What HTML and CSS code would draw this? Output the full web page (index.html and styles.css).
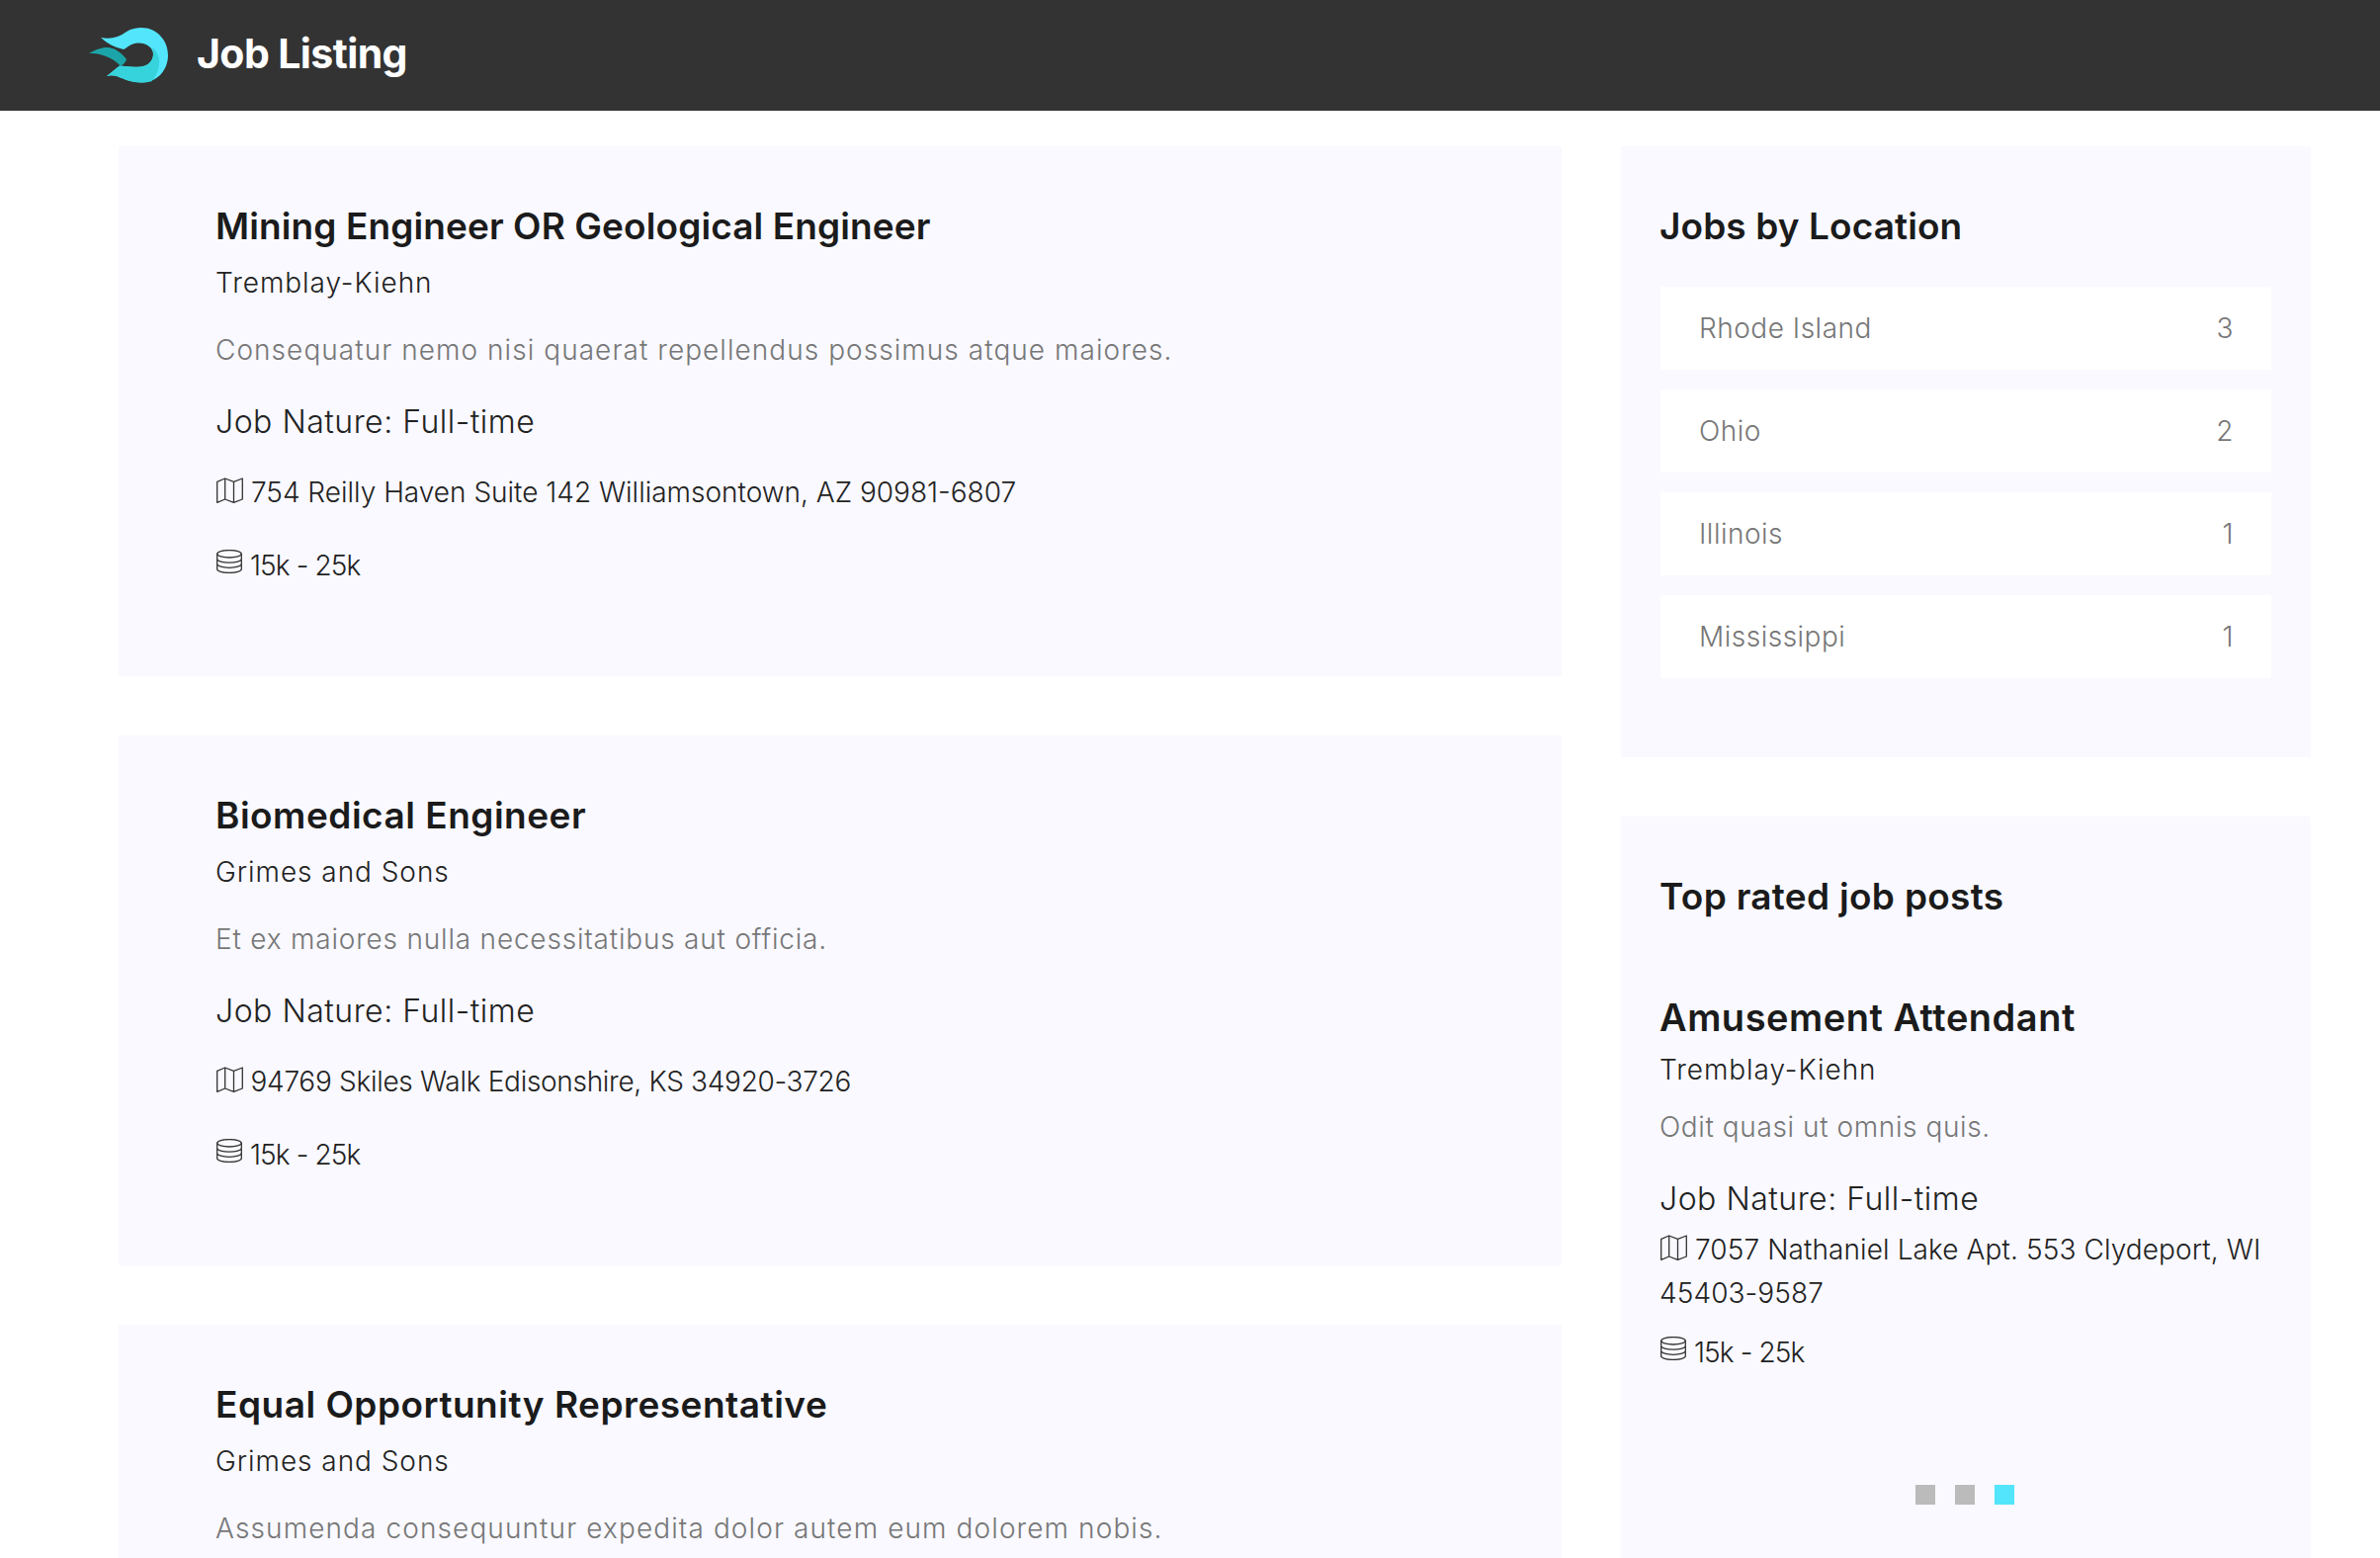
FILE: index.html
```html
<!DOCTYPE html>
<html lang="en">
<head>
<meta charset="utf-8">
<title>Job Listing</title>
<link rel="stylesheet" href="styles.css">
</head>
<body>
<svg class="defs" width="0" height="0" aria-hidden="true">
  <symbol id="i-map" viewBox="0 0 27 26"><path d="M.7 4.300 8.700 1 17.500 4.300 26.300 1V22L17.500 25.300 8.700 22 .7 25.300ZM8.700 1V22M17.500 4.300V25.300" fill="none" stroke="#333" stroke-width="1.300" stroke-linejoin="round"/></symbol>
  <symbol id="i-db" viewBox="0 0 27 24"><g fill="none" stroke="#333" stroke-width="1.300"><ellipse cx="13" cy="4.300" rx="12.300" ry="3.700"/><path d="M.7 4.300V19.700C.7 21.800 6.200 23.400 13 23.400S25.300 21.800 25.300 19.700V4.300M.7 9.500C.7 11.600 6.200 13.200 13 13.200S25.300 11.600 25.300 9.500M.7 14.600C.7 16.700 6.200 18.300 13 18.300S25.300 16.700 25.300 14.600"/></g></symbol>
</svg>
<header class="topbar">
  <svg class="logo" viewBox="0 0 80 56" aria-hidden="true">
    <path d="M12 10C22 12 30 10 38 4 43 1 48 0 53 0 69 0 80 13 80 28S69 55.500 53 55.500C43 55.500 36 52 28 49 24 48 21 48 18 49L31 38.500C38 39.500 45 40 52 39.500 60 39 65 33 65 27 65 20 58 15.500 50 15.500 43 15.500 39 20 35 22 26 20 17 15 12 10Z" fill="#52e5fb"/>
    <path d="M18 49 31 38.500C38 39.500 45 40 52 39.500 60 39 65 33 65 27 65 25 65 23 64 20 70 24 73 34 70 42 68 48 66 52 63 54.500 60 55 57 55.500 53 55.500 43 55.500 36 52 28 49 24 48 21 48 18 49Z" fill="#36d3dc"/>
    <path d="M0 26C5 23 10 21 16 20 25 19 33 25 38 32 37 35 35 37 32 39 28 33 14 25 0 26Z" fill="#1ba5a8"/>
  </svg>
  <span class="brand">Job Listing</span>
</header>
<div class="layout">
  <main class="jobs">
    <article class="job">
      <h2 class="job-title">Mining Engineer OR Geological Engineer</h2>
      <p class="company">Tremblay-Kiehn</p>
      <p class="desc">Consequatur nemo nisi quaerat repellendus possimus atque maiores.</p>
      <h4 class="nature">Job Nature: Full-time</h4>
      <p class="meta meta-wide"><svg class="ico"><use href="#i-map"/></svg> 754 Reilly Haven Suite 142 Williamsontown, AZ 90981-6807</p>
      <p class="meta salary"><svg class="ico ico-db"><use href="#i-db"/></svg> 15k - 25k</p>
    </article>
    <article class="job">
      <h2 class="job-title job-title-wide">Biomedical Engineer</h2>
      <p class="company">Grimes and Sons</p>
      <p class="desc desc-tight">Et ex maiores nulla necessitatibus aut officia.</p>
      <h4 class="nature">Job Nature: Full-time</h4>
      <p class="meta meta-tight"><svg class="ico"><use href="#i-map"/></svg> 94769 Skiles Walk Edisonshire, KS 34920-3726</p>
      <p class="meta salary"><svg class="ico ico-db"><use href="#i-db"/></svg> 15k - 25k</p>
    </article>
    <article class="job">
      <h2 class="job-title job-title-wide">Equal Opportunity Representative</h2>
      <p class="company">Grimes and Sons</p>
      <p class="desc desc-wide">Assumenda consequuntur expedita dolor autem eum dolorem nobis.</p>
    </article>
  </main>
  <aside class="side">
    <section class="panel panel-loc">
      <h3 class="panel-title">Jobs by Location</h3>
      <ul class="locs">
        <li class="loc"><span>Rhode Island</span><span>3</span></li>
        <li class="loc"><span>Ohio</span><span>2</span></li>
        <li class="loc"><span>Illinois</span><span>1</span></li>
        <li class="loc"><span>Mississippi</span><span>1</span></li>
      </ul>
    </section>
    <section class="panel panel-top">
      <h3 class="panel-title top-title">Top rated job posts</h3>
      <h4 class="top-job">Amusement Attendant</h4>
      <p class="company top-company">Tremblay-Kiehn</p>
      <p class="desc top-desc">Odit quasi ut omnis quis.</p>
      <h4 class="nature top-nature">Job Nature: Full-time</h4>
      <p class="meta top-meta"><svg class="ico"><use href="#i-map"/></svg> 7057 Nathaniel Lake Apt. 553 Clydeport, WI 45403-9587</p>
      <p class="meta salary top-salary"><svg class="ico ico-db"><use href="#i-db"/></svg> 15k - 25k</p>
      <div class="dots"><span class="dot"></span><span class="dot"></span><span class="dot dot-on"></span></div>
    </section>
  </aside>
</div>
</body>
</html>
```

FILE: styles.css
```css
html, body { margin: 0; padding: 0; height: 1576px; overflow: hidden; background: #fff; }
body { font-family: Inter, "Open Sans", "Liberation Sans", sans-serif; color: #222; }
h2, h3, h4, p, ul { margin: 0; padding: 0; }
.defs { display: block; height: 0; }

.topbar { height: 112px; background: #333; display: flex; align-items: center; padding-left: 90px; }
.logo { width: 80px; height: 56px; margin-top: -1px; }
.brand { margin-left: 29px; color: #fff; font-size: 41px; font-weight: 700; letter-spacing: -0.6px; line-height: 1; margin-top: -3px; }

.layout { display: flex; gap: 60px; padding: 36px 70px 0 120px; }
.jobs { width: 1460px; flex: none; display: flex; flex-direction: column; gap: 60px; }
.side { width: 698px; flex: none; display: flex; flex-direction: column; gap: 60px; }

.job { background: #f9f9ff; height: 536px; padding: 55px 98px 0; box-sizing: border-box; }
.job:last-child { height: 500px; }
.job-title { font-size: 37px; line-height: 52px; font-weight: 600; color: #1b1b1b; letter-spacing: 0.1px; }
.job-title-wide { letter-spacing: 0.5px; }
.company { font-size: 28px; line-height: 42px; margin-top: 10px; color: #222; font-weight: 300; letter-spacing: 0.95px; }
.desc { font-size: 28px; line-height: 42px; margin-top: 26px; color: #777; font-weight: 300; letter-spacing: 1.05px; }
.desc-tight { letter-spacing: 0.8px; }
.desc-wide { letter-spacing: 1.1px; }
.nature { font-size: 32px; line-height: 48px; margin-top: 28px; font-weight: 300; color: #222; letter-spacing: 0.5px; }
.meta { font-size: 28px; line-height: 44px; margin-top: 25px; color: #222; font-weight: 300; letter-spacing: -0.1px; }
.meta-wide { letter-spacing: 0; }
.meta-tight { letter-spacing: -0.3px; }
.salary { margin-top: 30px; letter-spacing: -0.9px; }
.ico { width: 27px; height: 26px; vertical-align: -1px; margin: 0 0 0 1px; }
.ico-db { height: 24px; vertical-align: 2px; }

.panel { background: #f9f9ff; padding: 0 40px 0 39px; box-sizing: border-box; }
.panel-loc { height: 618px; padding-top: 55px; }
.panel-top { height: 750px; padding-top: 55px; }
.panel-title { font-size: 37px; line-height: 52px; font-weight: 600; color: #1b1b1b; letter-spacing: 0.1px; }
.top-title { letter-spacing: 0.3px; }
.locs { list-style: none; margin: 35px 0 0 1px; display: flex; flex-direction: column; gap: 20px; }
.loc { height: 84px; background: #fff; display: flex; justify-content: space-between; align-items: center; padding: 0 38px 0 39px; font-size: 28px; font-weight: 300; color: #777; letter-spacing: 0.5px; }
.top-job { font-size: 38px; line-height: 54px; margin-top: 69px; font-weight: 600; color: #1b1b1b; letter-spacing: 0.5px; }
.top-company { margin-top: 5px; }
.top-desc { margin-top: 16px; letter-spacing: 0.6px; }
.top-nature { margin-top: 28px; }
.top-meta { margin-top: 5px; letter-spacing: 0.1px; }
.top-salary { margin-top: 16px; }
.dots { display: flex; justify-content: center; gap: 20px; margin-top: 112px; margin-left: -1px; }
.dot { width: 20px; height: 20px; background: #bbb; }
.dot-on { background: #52e5fb; }
```
